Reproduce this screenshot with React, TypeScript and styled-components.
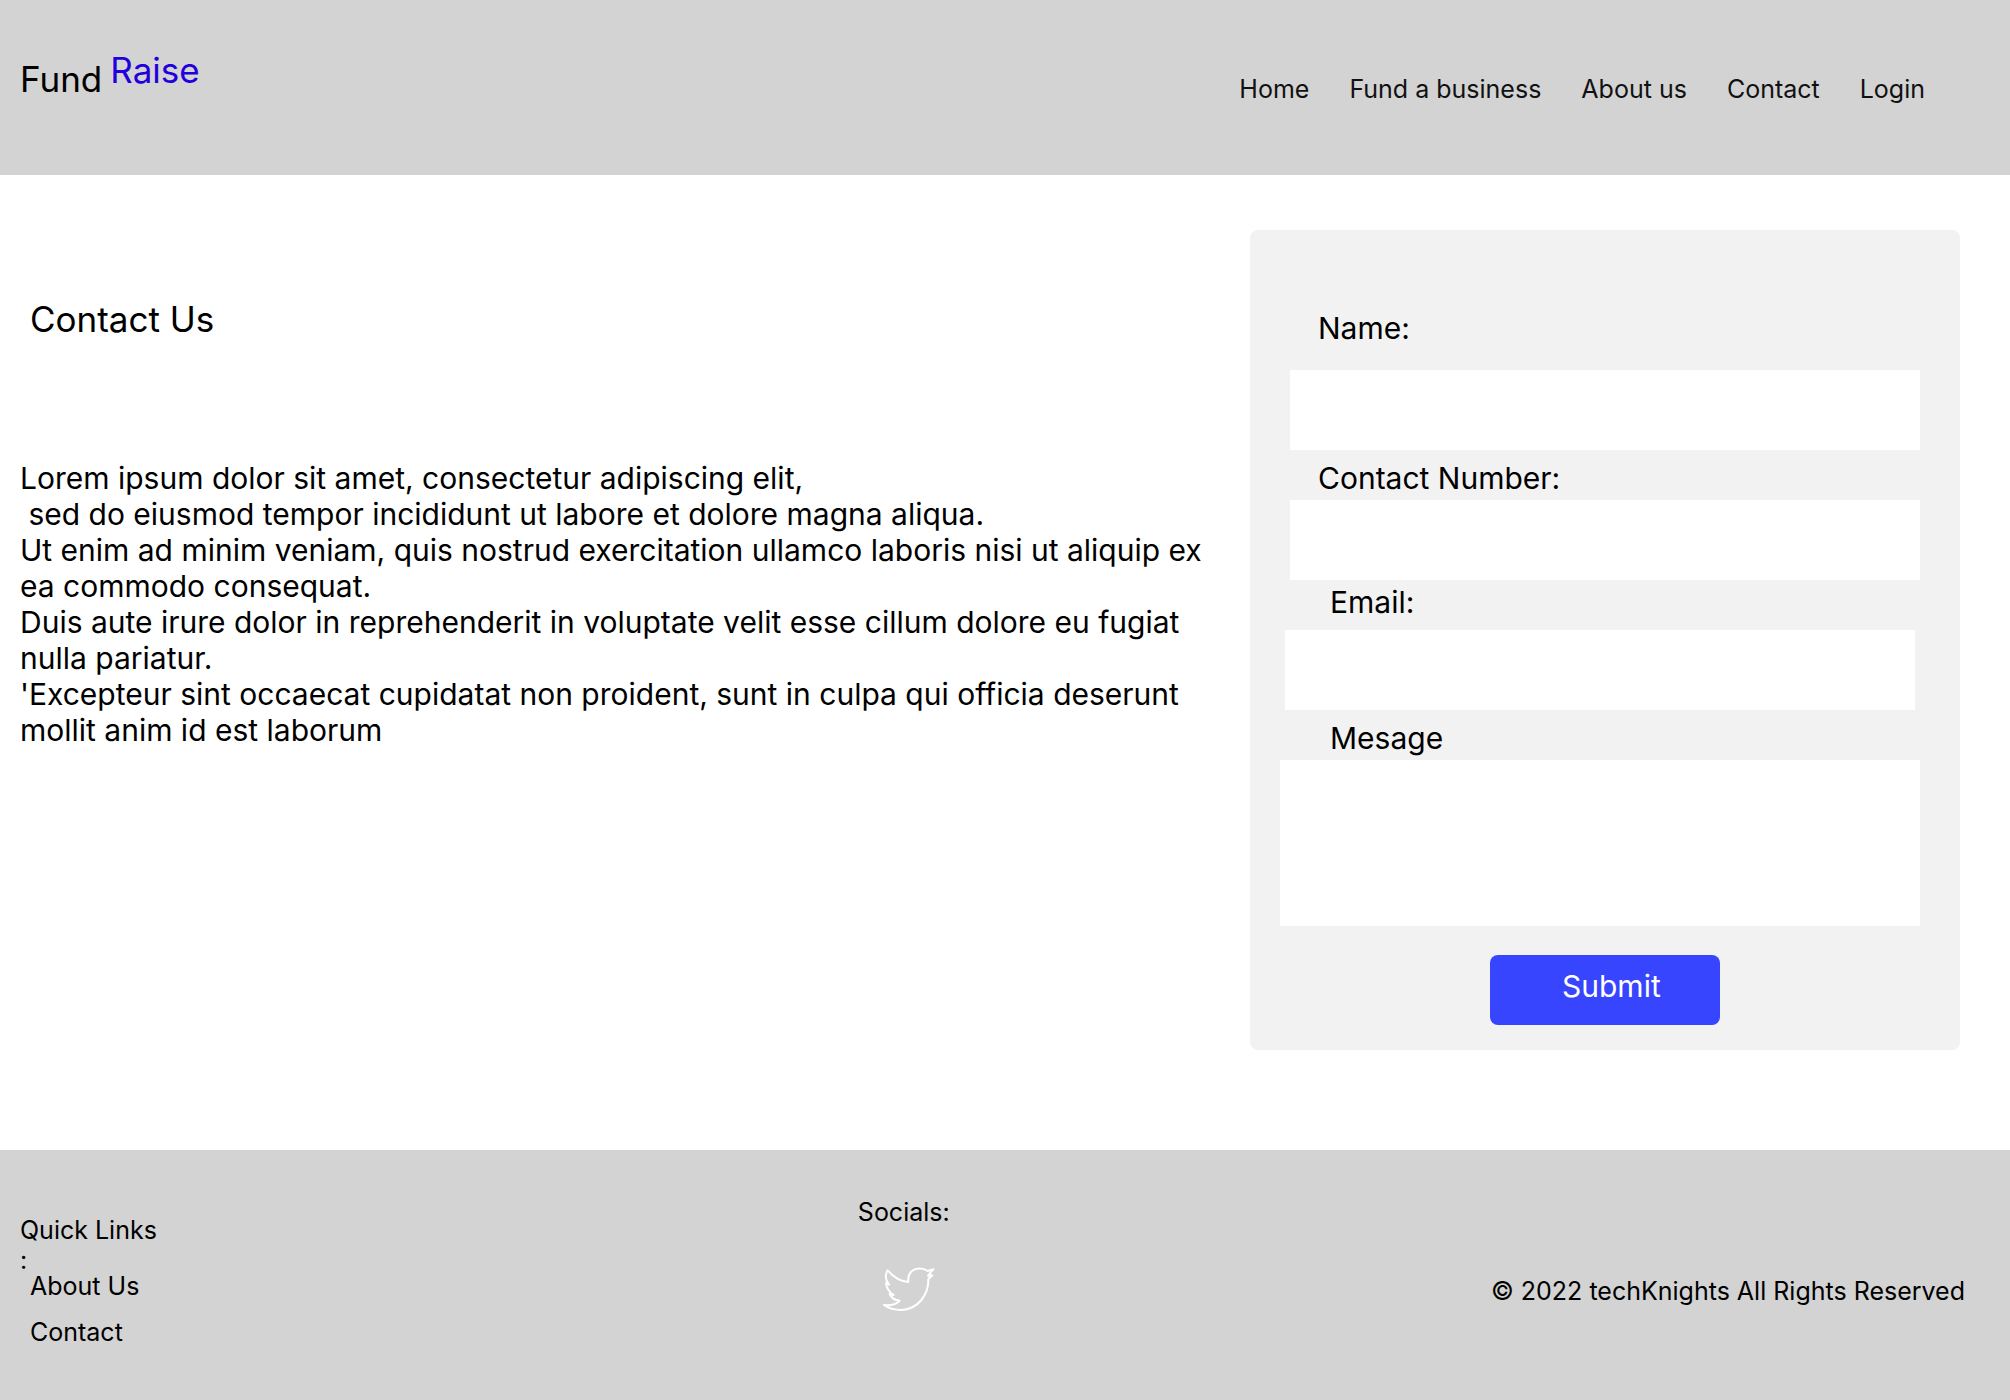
import React from "react";
import styled, { createGlobalStyle } from "styled-components";

const GlobalStyle = createGlobalStyle`
  *, *::before, *::after {
    box-sizing: border-box;
  }

  body {
    margin: 0;
    background: #ffffff;
    color: #000000;
    font-family: Inter, "Liberation Sans", sans-serif;
    font-weight: 400;
  }
`;

const Page = styled.div`
  display: flex;
  flex-direction: column;
  min-height: 100vh;
`;

const Header = styled.header`
  display: flex;
  justify-content: space-between;
  align-items: flex-start;
  min-height: 175px;
  padding: 49px 85px 0 20px;
  background: #d3d3d3;
`;

const Logo = styled.a`
  display: flex;
  gap: 8px;
  color: #000000;
  font-size: 35px;
  line-height: 42px;
  text-decoration: none;
`;

const LogoBase = styled.span`
  padding-top: 9px;
`;

const LogoAccent = styled.span`
  color: #2200dd;
`;

const Nav = styled.nav`
  display: flex;
  gap: 40px;
  padding-top: 25px;
  color: #111111;
`;

const TextLink = styled.a`
  color: inherit;
  font-size: 25px;
  line-height: 30px;
  text-decoration: none;
`;

const Main = styled.main`
  display: grid;
  grid-template-columns: minmax(0, 125fr) minmax(0, 71fr);
  align-items: start;
  flex: 1;
  padding: 55px 50px 100px 0;
`;

const Intro = styled.section`
  padding: 68px 30px 0 20px;
`;

const Title = styled.h1`
  margin: 0 0 120px;
  padding-left: 10px;
  font-size: 35px;
  font-weight: 400;
  line-height: 42px;
`;

const Copy = styled.p`
  margin: 0;
  font-size: 30px;
  line-height: 36px;
  white-space: pre-wrap;
`;

const Card = styled.form`
  display: flex;
  flex-direction: column;
  padding: 80px 40px 25px 30px;
  border-radius: 8px;
  background: #f2f2f2;
`;

const Field = styled.div<{ $start: number; $end: number; $gap: number; $after: number }>`
  display: flex;
  flex-direction: column;
  gap: ${(p) => p.$gap}px;
  padding: 0 ${(p) => p.$end}px ${(p) => p.$after}px ${(p) => p.$start}px;
`;

const Label = styled.label<{ $indent: number }>`
  padding-left: ${(p) => p.$indent}px;
  font-size: 30px;
  line-height: 36px;
`;

const Input = styled.input`
  width: 100%;
  height: 80px;
  padding: 0 20px;
  border: 0;
  border-radius: 0;
  background: #ffffff;
  font: inherit;
  font-size: 30px;
`;

const TextArea = styled.textarea`
  display: block;
  width: 100%;
  height: 166px;
  padding: 20px;
  border: 0;
  border-radius: 0;
  background: #ffffff;
  font: inherit;
  font-size: 30px;
  resize: none;
`;

const SubmitButton = styled.button`
  align-self: center;
  width: 230px;
  height: 70px;
  margin-left: 10px;
  padding: 0 0 8px 72px;
  border: 0;
  border-radius: 8px;
  background: #3845ff;
  color: #ffffff;
  font-family: inherit;
  font-size: 30px;
  font-weight: 400;
  line-height: 36px;
  text-align: left;
`;

const Footer = styled.footer`
  display: grid;
  grid-template-columns: 56fr 34fr 40fr;
  min-height: 250px;
  padding: 47px 45px 0 20px;
  background: #d3d3d3;
  font-size: 25px;
  line-height: 30px;
`;

const QuickLinks = styled.nav`
  display: flex;
  flex-direction: column;
  padding-top: 18px;
`;

const QuickTitle = styled.h2`
  width: 140px;
  height: 56px;
  margin: 0;
  font-size: 25px;
  font-weight: 400;
  line-height: 30px;
`;

const LinkList = styled.ul`
  display: flex;
  flex-direction: column;
  gap: 16px;
  margin: 0;
  padding: 0 0 0 10px;
  list-style: none;
`;

const LinkItem = styled.li`
  display: flex;
`;

const Socials = styled.section`
  display: flex;
  flex-direction: column;
  gap: 39px;
  justify-self: start;
`;

const SocialTitle = styled.h2`
  margin: 0;
  font-size: 25px;
  font-weight: 400;
  line-height: 30px;
`;

const SocialLink = styled.a`
  display: flex;
  justify-content: center;
  padding-left: 10px;
  color: #ffffff;
`;

const Copyright = styled.p`
  justify-self: end;
  margin: 0;
  padding-top: 79px;
`;

function TwitterIcon() {
  return (
    <svg width="54" height="48" viewBox="130 258 162 144" fill="none" aria-hidden="true">
      <path
        d="M136 375C150 385 168 390 188 390C238 388 270 345 269 297L281 286L268 287L284 268L267 273C259 267 248 265 237 266C218 268 206 284 209 306C184 304 163 290 147 271C139 284 140 300 151 314L142 309C143 324 151 336 165 345L153 342C158 354 168 361 183 362C171 373 154 378 136 375Z"
        stroke="currentColor"
        strokeWidth="6"
        strokeLinejoin="round"
      />
    </svg>
  );
}

const navItems = ["Home", "Fund a business", "About us", "Contact", "Login"];

const copy = `Lorem ipsum dolor sit amet, consectetur adipiscing elit,
 sed do eiusmod tempor incididunt ut labore et dolore magna aliqua.
Ut enim ad minim veniam, quis nostrud exercitation ullamco laboris nisi ut aliquip ex ea commodo consequat.
Duis aute irure dolor in reprehenderit in voluptate velit esse cillum dolore eu fugiat nulla pariatur.
'Excepteur sint occaecat cupidatat non proident, sunt in culpa qui officia deserunt mollit anim id est laborum`;

const fields = [
  { id: "name", label: "Name:", type: "text", start: 10, end: 0, indent: 28, gap: 24, after: 10 },
  { id: "phone", label: "Contact Number:", type: "tel", start: 10, end: 0, indent: 28, gap: 4, after: 4 },
  { id: "email", label: "Email:", type: "email", start: 5, end: 5, indent: 45, gap: 10, after: 10 },
];

export default function App() {
  return (
    <Page>
      <GlobalStyle />
      <Header>
        <Logo href="#">
          <LogoBase>Fund</LogoBase>
          <LogoAccent>Raise</LogoAccent>
        </Logo>
        <Nav aria-label="Main">
          {navItems.map((item) => (
            <TextLink key={item} href="#">
              {item}
            </TextLink>
          ))}
        </Nav>
      </Header>

      <Main>
        <Intro>
          <Title>Contact Us</Title>
          <Copy>{copy}</Copy>
        </Intro>

        <Card onSubmit={(event) => event.preventDefault()}>
          {fields.map((f) => (
            <Field key={f.id} $start={f.start} $end={f.end} $gap={f.gap} $after={f.after}>
              <Label htmlFor={f.id} $indent={f.indent}>
                {f.label}
              </Label>
              <Input id={f.id} name={f.id} type={f.type} />
            </Field>
          ))}
          <Field $start={0} $end={0} $gap={4} $after={29}>
            <Label htmlFor="message" $indent={50}>
              Mesage
            </Label>
            <TextArea id="message" name="message" />
          </Field>
          <SubmitButton type="submit">Submit</SubmitButton>
        </Card>
      </Main>

      <Footer>
        <QuickLinks aria-label="Quick links">
          <QuickTitle>Quick Links :</QuickTitle>
          <LinkList>
            <LinkItem>
              <TextLink href="#">About Us</TextLink>
            </LinkItem>
            <LinkItem>
              <TextLink href="#">Contact</TextLink>
            </LinkItem>
          </LinkList>
        </QuickLinks>
        <Socials>
          <SocialTitle>Socials:</SocialTitle>
          <SocialLink href="#" aria-label="Twitter">
            <TwitterIcon />
          </SocialLink>
        </Socials>
        <Copyright>© 2022 techKnights All Rights Reserved</Copyright>
      </Footer>
    </Page>
  );
}
